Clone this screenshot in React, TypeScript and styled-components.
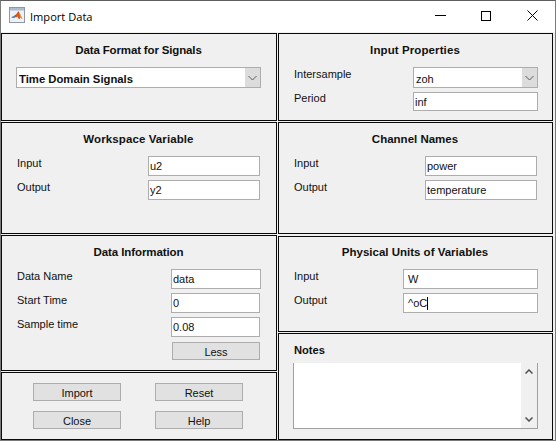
import React from "react";
import styled, { createGlobalStyle } from "styled-components";

const Global = createGlobalStyle`
  html, body { margin: 0; padding: 0; background: #f0f0f0; }
  #root { width: 556px; height: 441px; }
  * { box-sizing: border-box; }
`;

const Win = styled.div`
  width: 556px; height: 441px; display: flex; flex-direction: column; overflow: hidden;
  background: #f0f0f0; font-family: "Liberation Sans", Arial, sans-serif; font-size: 11px; color: #101010;
  border-top: 1px solid #5e5e5e; border-left: 1px solid #7a7a7a; border-right: 1px solid #7a7a7a; border-bottom: 1px solid #7a7a7a;
`;
const TitleBar = styled.div`
  height: 31px; flex: none; background: #fff; display: flex; align-items: center; padding-left: 8px;
`;
const AppIcon = styled.svg` width: 16px; height: 16px; flex: none; margin-bottom: 3px; `;
const TitleText = styled.span` margin-left: 5px; font-family: "Open Sans", "Liberation Sans", sans-serif; font-size: 11.1px; color: #000; `;
const WinButtons = styled.div` margin-left: auto; display: flex; height: 100%; `;
const WinButton = styled.div` width: 46px; height: 100%; display: flex; align-items: center; justify-content: center; padding-bottom: 2px; `;
const Content = styled.div`
  display: grid; grid-template-columns: 276px 275px; column-gap: 1px; padding-top: 1px; align-items: start;
`;
const Column = styled.div` display: flex; flex-direction: column; gap: 1px; `;
const Panel = styled.section<{ $h: number; $side: "left" | "right" }>`
  height: ${(p) => p.$h}px; border: 1px solid #0a0a0a; background: #f0f0f0;
  padding: 8px ${(p) => (p.$side === "left" ? 16 : 14)}px 0 15px; display: flex; flex-direction: column;
`;
const UnitsPanel = styled(Panel)` margin-top: 1px; padding-top: 7px; `;
const Title = styled.h3<{ $track?: number }>`
  margin: 0 0 9px; font-size: 11.5px; font-weight: 700; text-align: center; line-height: 16px; height: 16px; color: #111;
  letter-spacing: ${(p) => p.$track ?? 0}px;
`;
const RightTitle = styled(Title)` padding-right: 2px; `;
const NotesTitle = styled(Title)` text-align: left; margin-bottom: 5px; font-size: 11.15px; `;
const Row = styled.div` display: flex; justify-content: space-between; height: 20px; margin-bottom: 4px; `;
const Label = styled.label` line-height: 14px; font-size: 11px; `;
const Field = styled.div<{ $w: number }>`
  width: ${(p) => p.$w}px; height: 20px; background: #fff; border: 1px solid #adadad; line-height: 18px; padding-left: 1px; font-size: 11px; display: flex; align-items: center;
`;
const WideField = styled(Field)` margin-right: -1px; `;
const PeriodField = styled(Field)` height: 19px; margin-top: 1px; `;
const ChannelField = styled(Field)` margin-right: 1px; `;
const UnitField = styled(Field)` padding-left: 4px; `;
const Caret = styled.span` display: inline-block; width: 1px; height: 13px; background: #000; `;
const Select = styled.div<{ $w: number; $bold?: boolean }>`
  width: ${(p) => p.$w}px; height: 21px; background: #fff; border: 1px solid #adadad; display: flex; align-items: center; padding-left: 2px;
  font-weight: ${(p) => (p.$bold ? 700 : 400)}; font-size: ${(p) => (p.$bold ? 11.3 : 11)}px;
`;
const SelectText = styled.span` margin-top: 2px; `;
const FormatSelect = styled(Select)` margin-left: -1px; `;
const Chevron = styled.div`
  margin-left: auto; width: 15px; height: 100%; background: #dcdcdc; display: flex; align-items: center; justify-content: center;
`;
const LessRow = styled.div` display: flex; justify-content: flex-end; margin-top: 1px; `;
const Btn = styled.button`
  width: 88px; height: 18px; background: #e1e1e1; border: 1px solid #adadad; font-family: inherit; font-size: 11px; color: #101010; padding: 1px 0 0;
`;
const ButtonGrid = styled.div`
  display: grid; grid-template-columns: 88px 88px; column-gap: 34px; row-gap: 10px; padding-left: 16px; margin-top: 2px;
`;
const NotesBox = styled.div`
  height: 66px; margin-left: -1px; background: #fff; display: flex; justify-content: flex-end;
  border-left: 1px solid #a0a0a0; border-right: 1px solid #a0a0a0; border-bottom: 1px solid #a0a0a0;
`;
const Scroll = styled.div`
  width: 16px; background: #f0f0f0; display: flex; flex-direction: column; justify-content: space-between; align-items: center; padding: 6px 0 6px;
`;

const Down = () => (
  <svg width="9" height="6" viewBox="0 0 9 6"><path d="M.5 1 4.500 5 8.500 1" fill="none" stroke="#5a5a5a" /></svg>
);
const Up = () => (
  <svg width="8" height="5" viewBox="0 0 8 5"><path d="M.5 4.500 4 1 7.500 4.500" fill="none" stroke="#505050" strokeWidth="1.5" /></svg>
);
const DownS = () => (
  <svg width="8" height="5" viewBox="0 0 8 5"><path d="M.5 .5 4 4 7.500 .5" fill="none" stroke="#505050" strokeWidth="1.5" /></svg>
);

export default function App() {
  return (
    <Win>
      <Global />
      <TitleBar>
        <AppIcon viewBox="0 0 16 16">
          <rect x=".5" y=".5" width="15" height="15" fill="#eef1f5" stroke="#8d97a5" />
          <rect x="1" y="1" width="14" height="2.500" fill="#aebccd" />
          <path d="M2 10.500l3-1.500 2-1.500 2.500-3.500 1.500 3 2.500 5-2-1.500-1.500 2-1.500-3-1.500 1-2-1z" fill="#d8561f" />
          <path d="M2 10.500l3-1.500 2-1.500-1 3-1.500.5z" fill="#3a7fbb" />
          <path d="M9.500 4l1.500 3 2.500 5-2-1.500z" fill="#eda83c" />
        </AppIcon>
        <TitleText>Import Data</TitleText>
        <WinButtons>
          <WinButton><svg width="11" height="11" viewBox="0 0 11 11"><path d="M0 5.500h11" stroke="#000" /></svg></WinButton>
          <WinButton><svg width="10" height="10" viewBox="0 0 10 10"><rect x=".5" y=".5" width="9" height="9" fill="none" stroke="#000" /></svg></WinButton>
          <WinButton><svg width="11" height="11" viewBox="0 0 11 11"><path d="M.5.500l10 10M10.500.500l-10 10" stroke="#000" /></svg></WinButton>
        </WinButtons>
      </TitleBar>
      <Content>
        <Column>
          <Panel $h={88} $side="left">
            <Title $track={-0.15}>Data Format for Signals</Title>
            <FormatSelect $w={245} $bold><SelectText>Time Domain Signals</SelectText><Chevron><Down /></Chevron></FormatSelect>
          </Panel>
          <Panel $h={112} $side="left">
            <Title $track={0.1}>Workspace Variable</Title>
            <Row><Label>Input</Label><Field $w={112}>u2</Field></Row>
            <Row><Label>Output</Label><Field $w={112}>y2</Field></Row>
          </Panel>
          <Panel $h={136} $side="left">
            <Title $track={-0.1}>Data Information</Title>
            <Row><Label>Data Name</Label><WideField $w={90}>data</WideField></Row>
            <Row><Label>Start Time</Label><Field $w={89}>0</Field></Row>
            <Row><Label>Sample time</Label><Field $w={89}>0.08</Field></Row>
            <LessRow><Btn>Less</Btn></LessRow>
          </Panel>
          <Panel $h={68} $side="left">
            <ButtonGrid>
              <Btn>Import</Btn><Btn>Reset</Btn>
              <Btn>Close</Btn><Btn>Help</Btn>
            </ButtonGrid>
          </Panel>
        </Column>
        <Column>
          <Panel $h={88} $side="right">
            <RightTitle $track={0.1}>Input Properties</RightTitle>
            <Row><Label>Intersample</Label><Select $w={125}><SelectText>zoh</SelectText><Chevron><Down /></Chevron></Select></Row>
            <Row><Label>Period</Label><PeriodField $w={125}>inf</PeriodField></Row>
          </Panel>
          <Panel $h={112} $side="right">
            <RightTitle>Channel Names</RightTitle>
            <Row><Label>Input</Label><ChannelField $w={112}>power</ChannelField></Row>
            <Row><Label>Output</Label><ChannelField $w={112}>temperature</ChannelField></Row>
          </Panel>
          <UnitsPanel $h={96} $side="right">
            <RightTitle>Physical Units of Variables</RightTitle>
            <Row><Label>Input</Label><UnitField $w={135}>W</UnitField></Row>
            <Row><Label>Output</Label><UnitField $w={135}>^oC<Caret /></UnitField></Row>
          </UnitsPanel>
          <Panel $h={107} $side="right">
            <NotesTitle>Notes</NotesTitle>
            <NotesBox><Scroll><Up /><DownS /></Scroll></NotesBox>
          </Panel>
        </Column>
      </Content>
    </Win>
  );
}
